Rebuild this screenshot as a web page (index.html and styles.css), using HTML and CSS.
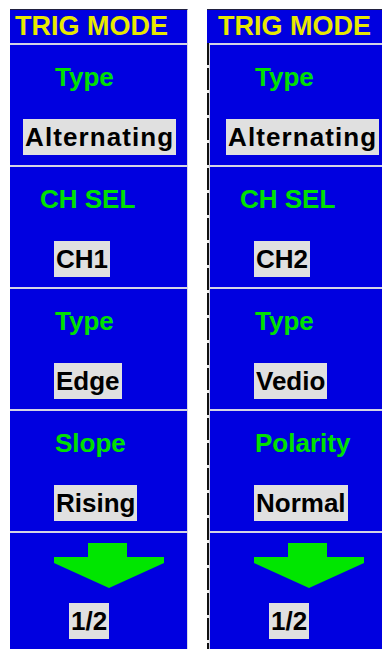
FILE: index.html
```html
<!doctype html>
<html lang="en">

<head>
    <meta charset="utf-8">
    <meta name="viewport" content="width=device-width, initial-scale=1">
    <title>TRIG MODE</title>
    <link rel="stylesheet" href="styles.css">
</head>

<body>
    <div class="screen">
        <div class="panel panel-left">
            <div class="head">TRIG MODE</div>
            <div class="body">
                <div class="items">
                    <div class="item">
                        <div class="label">Type</div>
                        <div class="value wide">Alternating</div>
                    </div>
                    <div class="item">
                        <div class="label chsel">CH SEL</div>
                        <div class="value">CH1</div>
                    </div>
                    <div class="item">
                        <div class="label">Type</div>
                        <div class="value">Edge</div>
                    </div>
                    <div class="item">
                        <div class="label">Slope</div>
                        <div class="value">Rising</div>
                    </div>
                    <div class="item">
                        <svg class="arrow" width="110" height="46" viewBox="0 0 110 46">
                            <polygon points="34,0 73,0 73,14 110,14 110,20 55,45 0,20 0,14 34,14" fill="#00e600"/>
                        </svg>
                        <div class="value page">1/2</div>
                    </div>
                </div>
            </div>
        </div>

        <div class="panel panel-right">
            <div class="head">TRIG MODE</div>
            <div class="body">
                <div class="rail"></div>
                <div class="items">
                    <div class="item">
                        <div class="label">Type</div>
                        <div class="value wide">Alternating</div>
                    </div>
                    <div class="item">
                        <div class="label chsel">CH SEL</div>
                        <div class="value">CH2</div>
                    </div>
                    <div class="item">
                        <div class="label">Type</div>
                        <div class="value">Vedio</div>
                    </div>
                    <div class="item">
                        <div class="label">Polarity</div>
                        <div class="value">Normal</div>
                    </div>
                    <div class="item">
                        <svg class="arrow" width="110" height="46" viewBox="0 0 110 46">
                            <polygon points="34,0 73,0 73,14 110,14 110,20 55,45 0,20 0,14 34,14" fill="#00e600"/>
                        </svg>
                        <div class="value page">1/2</div>
                    </div>
                </div>
            </div>
        </div>
    </div>
</body>

</html>
```

FILE: styles.css
```css
body {
    margin: 0;
    background-color: white;
    font-family: "Liberation Sans", Arial, sans-serif;
    font-weight: bold;
}

.screen {
    display: flex;
    gap: 19px;
    padding: 9px 0 0 10px;
    height: 640px;
    overflow: hidden;
}

.panel {
    display: flex;
    flex-direction: column;
    border-top: 1px solid #202040;
}

.panel-left {
    width: 177px;
    border-right: 1px solid #d8d8e8;
}

.panel-right {
    width: 175px;
}

.head {
    height: 33px;
    line-height: 33px;
    font-size: 27px;
    color: #e8e800;
    background-color: #0000e0;
    padding-left: 5px;
    white-space: nowrap;
}

.panel-right .head {
    padding-left: 11px;
}

.body {
    display: flex;
}

.rail {
    width: 2px;
    flex: none;
    background: repeating-linear-gradient(to bottom, #111 0 22px, #eee 22px 25px);
    border-right: 1px solid #d0d0e0;
}

.items {
    flex: 1;
    overflow: hidden;
}

.item {
    height: 120px;
    border-top: 2px solid #d4d4e4;
    background-color: #0000e0;
    padding-left: 44px;
    overflow: hidden;
}

.label {
    margin-top: 17px;
    height: 30px;
    line-height: 30px;
    font-size: 26px;
    color: #00e000;
    padding-left: 1px;
}

.label.chsel {
    margin-left: -15px;
}

.value {
    display: inline-block;
    margin-top: 27px;
    height: 36px;
    line-height: 36px;
    font-size: 26px;
    color: black;
    background-color: #e0e0e0;
    padding: 0 2px;
    white-space: nowrap;
}

.value.wide {
    margin-left: -31px;
    letter-spacing: 1.1px;
}

.panel-right .value.wide {
    margin-left: -28px;
}

.arrow {
    display: block;
    margin-top: 10px;
}

.value.page {
    margin-top: 14px;
    margin-left: 15px;
}
```
